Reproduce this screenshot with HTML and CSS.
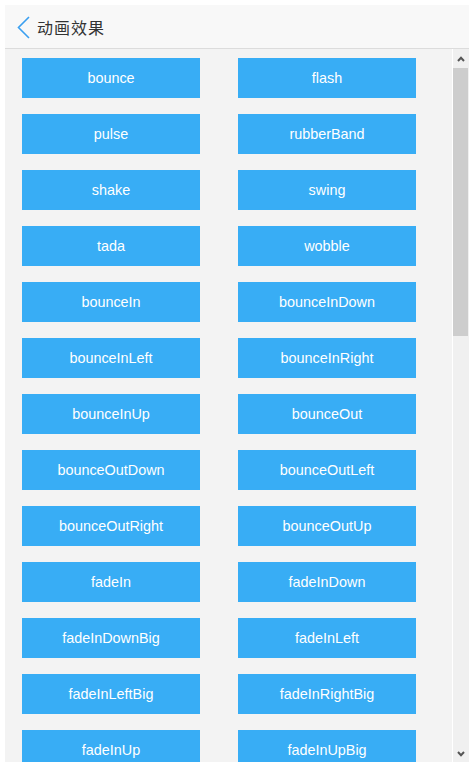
FILE: index.html
```html
<!DOCTYPE html>
<html lang="zh">
<head>
<meta charset="utf-8">
<title>动画效果</title>
<link rel="stylesheet" href="styles.css">
</head>
<body>
<div class="app">
  <header class="header">
    <svg class="back" width="13" height="23" viewBox="0 0 13 23"><polyline points="12,1 1.5,11.5 12,22" fill="none" stroke="#3a9ff0" stroke-width="1.6"/></svg>
    <span class="title">动画效果</span>
  </header>
  <div class="main">
    <div class="content">
      <div class="grid">
        <div class="btn">bounce</div><div class="btn">flash</div>
        <div class="btn">pulse</div><div class="btn">rubberBand</div>
        <div class="btn">shake</div><div class="btn">swing</div>
        <div class="btn">tada</div><div class="btn">wobble</div>
        <div class="btn">bounceIn</div><div class="btn">bounceInDown</div>
        <div class="btn">bounceInLeft</div><div class="btn">bounceInRight</div>
        <div class="btn">bounceInUp</div><div class="btn">bounceOut</div>
        <div class="btn">bounceOutDown</div><div class="btn">bounceOutLeft</div>
        <div class="btn">bounceOutRight</div><div class="btn">bounceOutUp</div>
        <div class="btn">fadeIn</div><div class="btn">fadeInDown</div>
        <div class="btn">fadeInDownBig</div><div class="btn">fadeInLeft</div>
        <div class="btn">fadeInLeftBig</div><div class="btn">fadeInRightBig</div>
        <div class="btn">fadeInUp</div><div class="btn">fadeInUpBig</div>
      </div>
    </div>
    <div class="scrollbar">
      <div class="sb-btn sb-up"><svg width="8" height="6" viewBox="0 0 8 6"><polyline points="1,5 4,1.8 7,5" fill="none" stroke="#555" stroke-width="2"/></svg></div>
      <div class="sb-thumb"></div>
      <div class="sb-rest"></div>
      <div class="sb-btn sb-down"><svg width="8" height="6" viewBox="0 0 8 6"><polyline points="1,1 4,4.2 7,1" fill="none" stroke="#555" stroke-width="2"/></svg></div>
    </div>
  </div>
</div>
</body>
</html>
```
FILE: styles.css
```css
html, body {
  margin: 0;
  padding: 0;
  background: #ffffff;
}
body {
  padding: 5px;
}
.app {
  width: 464px;
  height: 757px;
  display: flex;
  flex-direction: column;
  overflow: hidden;
}
.header {
  height: 43px;
  flex: none;
  background: #f8f8f8;
  border-bottom: 1px solid #dcdcdc;
  display: flex;
  align-items: center;
  padding-left: 12px;
  gap: 7px;
}
.back {
  display: block;
  margin-top: 1px;
}
.title {
  font-family: "Noto Sans CJK SC", "Liberation Sans", sans-serif;
  font-size: 16px;
  color: #333333;
  letter-spacing: 1px;
  line-height: 20px;
}
.main {
  flex: 1;
  display: flex;
  min-height: 0;
}
.content {
  flex: 1;
  background: #f3f3f3;
  padding: 9px 0 0 17px;
  overflow: hidden;
}
.grid {
  display: grid;
  grid-template-columns: 178px 178px;
  grid-auto-rows: 40px;
  column-gap: 38px;
  row-gap: 16px;
}
.btn {
  background: #38adf5;
  color: #ffffff;
  font-family: "Liberation Sans", Arial, sans-serif;
  font-size: 14.4px;
  display: flex;
  align-items: center;
  justify-content: center;
}
.scrollbar {
  width: 16px;
  flex: none;
  border-left: 1px solid #ffffff;
  background: #f0f0f0;
  display: flex;
  flex-direction: column;
}
.sb-btn {
  flex: none;
  display: flex;
  justify-content: center;
  align-items: center;
}
.sb-up {
  height: 19px;
  padding-right: 1px;
}
.sb-thumb {
  height: 268px;
  flex: none;
  background: #cdcdcd;
  margin-right: 1px;
}
.sb-rest {
  flex: 1;
}
.sb-down {
  height: 17px;
  padding-right: 1px;
}
```
